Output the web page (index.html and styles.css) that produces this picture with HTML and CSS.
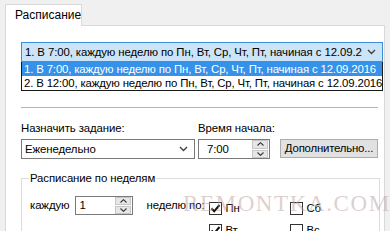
FILE: index.html
```html
<!DOCTYPE html>
<html lang="ru">
<head>
<meta charset="utf-8">
<title>Расписание</title>
<link rel="stylesheet" href="styles.css">
</head>
<body>
<div class="window">
  <div class="tabstrip">
    <div class="tab">Расписание</div>
  </div>
  <div class="page">
    <div class="schedule">
      <div class="combo focused">
        <span class="combo-text">1. В 7:00, каждую неделю по Пн, Вт, Ср, Чт, Пт, начиная с 12.09.2016</span>
        <svg class="chev" width="9" height="6" viewBox="0 0 9 6"><polyline points="1,1 4.5,4.5 8,1" fill="none" stroke="#404040" stroke-width="1.4"/></svg>
      </div>
      <ul class="droplist">
        <li class="sel">1. В 7:00, каждую неделю по Пн, Вт, Ср, Чт, Пт, начиная с 12.09.2016</li>
        <li>2. В 12:00, каждую неделю по Пн, Вт, Ср, Чт, Пт, начиная с 12.09.2016</li>
      </ul>
    </div>
    <div class="sep"></div>
    <div class="task-row">
      <div class="field task">
        <div class="label">Назначить задание:</div>
        <div class="combo plain">
          <span class="combo-text">Еженедельно</span>
          <svg class="chev" width="9" height="6" viewBox="0 0 9 6"><polyline points="1,1 4.5,4.5 8,1" fill="none" stroke="#404040" stroke-width="1.4"/></svg>
        </div>
      </div>
      <div class="field time">
        <div class="label">Время начала:</div>
        <div class="ctrls">
          <div class="spin time-spin">
            <span class="spin-text">7:00</span>
            <div class="spin-btns">
              <div class="sbtn"><svg width="7" height="4" viewBox="0 0 7 4"><polyline points="0.5,3.5 3.5,0.7 6.5,3.5" fill="none" stroke="#333" stroke-width="1.1"/></svg></div>
              <div class="sbtn"><svg width="7" height="4" viewBox="0 0 7 4"><polyline points="0.5,0.5 3.5,3.3 6.5,0.5" fill="none" stroke="#333" stroke-width="1.1"/></svg></div>
            </div>
          </div>
          <div class="btn">Дополнительно...</div>
        </div>
      </div>
    </div>
    <fieldset class="weekly">
      <legend>Расписание по неделям</legend>
      <div class="weekly-row">
        <span class="wtext">каждую</span>
        <div class="spin num-spin">
          <span class="spin-text">1</span>
          <div class="spin-btns">
            <div class="sbtn"><svg width="7" height="4" viewBox="0 0 7 4"><polyline points="0.5,3.5 3.5,0.7 6.5,3.5" fill="none" stroke="#333" stroke-width="1.1"/></svg></div>
            <div class="sbtn"><svg width="7" height="4" viewBox="0 0 7 4"><polyline points="0.5,0.5 3.5,3.3 6.5,0.5" fill="none" stroke="#333" stroke-width="1.1"/></svg></div>
          </div>
        </div>
        <span class="wtext days-label">неделю по:</span>
        <div class="days">
          <div class="day"><span class="cb checked"><svg width="11" height="11" viewBox="0 0 11 11"><polyline points="1.5,5.5 4.2,8.3 9.5,2" fill="none" stroke="#111" stroke-width="2"/></svg></span>Пн</div>
          <div class="day"><span class="cb"></span>Сб</div>
          <div class="day"><span class="cb checked"><svg width="11" height="11" viewBox="0 0 11 11"><polyline points="1.5,5.5 4.2,8.3 9.5,2" fill="none" stroke="#111" stroke-width="2"/></svg></span>Вт</div>
          <div class="day"><span class="cb"></span>Вс</div>
        </div>
      </div>
    </fieldset>
    <div class="watermark">REMONTKA.COM</div>
  </div>
</div>
</body>
</html>
```

FILE: styles.css
```css
html, body {
  margin: 0;
  padding: 0;
  height: 231px;
  overflow: hidden;
}
body {
  background: #f0f0f0;
  font-family: "Liberation Sans", Arial, sans-serif;
  font-size: 11.4px;
  letter-spacing: -0.1px;
  color: #000;
}
.window {
  width: 390px;
  height: 231px;
  position: relative;
  overflow: hidden;
}
.tabstrip {
  display: flex;
  padding: 4px 0 0 5px;
  height: 21px;
}
.tab {
  width: 77px;
  box-sizing: border-box;
  border: 1px solid #d9d9d9;
  border-bottom: none;
  background: #fff;
  padding: 3px 0 0 9px;
  line-height: 15px;
  font-size: 12px;
  letter-spacing: 0;
  position: relative;
  z-index: 1;
  margin-bottom: -1px;
  height: 22px;
}
.page {
  margin-left: 5px;
  width: 380px;
  height: 210px;
  box-sizing: border-box;
  border-left: 1px solid #d9d9d9;
  border-top: 1px solid #d9d9d9;
  border-right: 1px solid #d9d9d9;
  background: #fff;
  padding: 16px 0 0 15px;
  position: relative;
}
.schedule {
  position: relative;
  width: 362px;
}
.combo {
  display: flex;
  align-items: center;
  height: 20px;
  box-sizing: border-box;
  border: 1px solid #7a7a7a;
  background: #fff;
  padding: 0 0 0 3px;
  overflow: hidden;
}
.combo.focused {
  border-color: #3c8ed8;
  background: #cce4f7;
  width: 362px;
}
.combo-text {
  flex: 1;
  white-space: nowrap;
  overflow: hidden;
  line-height: 18px;
}
.chev {
  flex: none;
  margin: 0 6px 0 5px;
}
.droplist {
  position: absolute;
  top: 20px;
  left: 0;
  width: 362px;
  margin: 0;
  padding: 0;
  list-style: none;
  box-sizing: border-box;
  border: 1px solid #1a1a1a;
  border-top: none;
  background: #fff;
  z-index: 2;
  letter-spacing: -0.15px;
}
.droplist li {
  height: 14px;
  line-height: 14px;
  padding-left: 2px;
  white-space: nowrap;
  overflow: hidden;
}
.droplist li.sel {
  background: #3592e8;
  color: #fff;
}
.sep {
  width: 357px;
  height: 1px;
  background: #b4b4b4;
  margin-top: 45px;
}
.task-row {
  display: flex;
  gap: 3px;
  margin-top: 13px;
}
.field {
  display: flex;
  flex-direction: column;
  gap: 3px;
}
.label {
  line-height: 15px;
}
.task {
  width: 174px;
}
.ctrls {
  display: flex;
  gap: 10px;
  align-items: flex-start;
}
.spin {
  display: flex;
  box-sizing: border-box;
  border: 1px solid #7a7a7a;
  background: #fff;
}
.time-spin {
  width: 72px;
  height: 20px;
}
.spin-text {
  flex: 1;
  line-height: 18px;
}
.time-spin .spin-text {
  padding-left: 8px;
}
.spin-btns {
  width: 16px;
  display: flex;
  flex-direction: column;
  gap: 1px;
  padding: 0 1px 0 0;
}
.sbtn {
  flex: 1;
  background: #e6e6e6;
  border: 1px solid #c6c6c6;
  display: flex;
  align-items: center;
  justify-content: center;
}
.btn {
  width: 98px;
  height: 19px;
  box-sizing: border-box;
  background: #e1e1e1;
  border: 1px solid #adadad;
  line-height: 17px;
  text-align: center;
  white-space: nowrap;
  letter-spacing: -0.2px;
}
.weekly {
  margin: 12px 0 0 0;
  width: 359px;
  box-sizing: border-box;
  border: 1px solid #dcdcdc;
  border-bottom: none;
  padding: 0 0 30px 7px;
  min-width: 0;
}
.weekly legend {
  padding: 0 1px;
  line-height: 15px;
}
.weekly-row {
  display: flex;
  align-items: flex-start;
  margin-top: 10px;
}
.wtext {
  line-height: 19px;
  margin-left: 1px;
}
.num-spin {
  width: 58px;
  height: 19px;
  margin-left: 6px;
}
.num-spin .spin-text {
  padding-left: 3px;
  line-height: 17px;
}
.days-label {
  margin-left: 13px;
}
.days {
  display: grid;
  grid-template-columns: 81px 60px;
  row-gap: 9px;
  margin-left: 5px;
  margin-top: 6px;
}
.day {
  display: flex;
  align-items: center;
  gap: 3px;
  height: 13px;
  line-height: 13px;
}
.cb {
  width: 13px;
  height: 13px;
  box-sizing: border-box;
  border: 1px solid #333;
  background: #fff;
  display: flex;
  align-items: center;
  justify-content: center;
}
.watermark {
  position: absolute;
  left: 177px;
  top: 165px;
  font-family: "Liberation Serif", "Times New Roman", serif;
  font-size: 23px;
  letter-spacing: 1.6px;
  color: rgba(190, 160, 160, 0.5);
  pointer-events: none;
  z-index: 3;
}
```
